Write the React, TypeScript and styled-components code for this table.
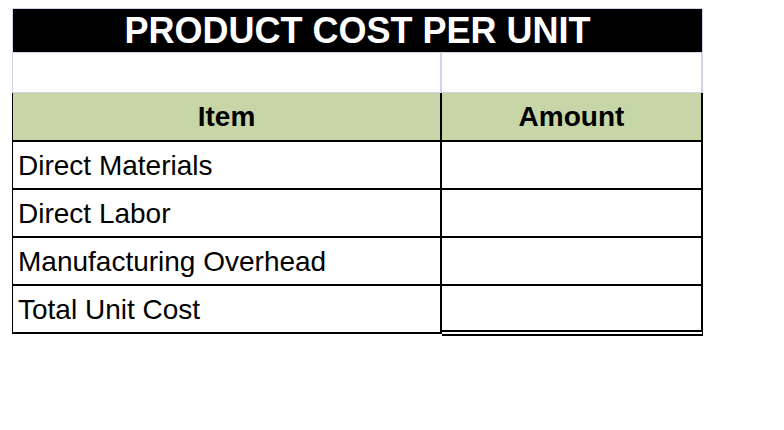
import styled, { createGlobalStyle } from 'styled-components';

const GRID_GRAY = '#d3d3e3';
const HEADER_GREEN = '#c7d6a7';

const GlobalStyle = createGlobalStyle`
  html, body {
    margin: 0;
    padding: 0;
    background: #ffffff;
  }
  body {
    font-family: "Liberation Sans", Arial, sans-serif;
  }
  #root {
    padding: 8px 0 0 12px;
  }
`;

const items = ['Direct Materials', 'Direct Labor', 'Manufacturing Overhead', 'Total Unit Cost'];

const App = () => {
  return (
    <>
      <GlobalStyle />
      <Sheet>
        <Title>PRODUCT COST PER UNIT</Title>

        <Row>
          <BlankCell $first />
          <BlankCell />
        </Row>

        <Row>
          <HeaderCell $first>Item</HeaderCell>
          <HeaderCell>Amount</HeaderCell>
        </Row>

        {items.map((item, i) => {
          const isTotal = i === items.length - 1;
          return (
            <Row key={item}>
              <ItemCell>{item}</ItemCell>
              <AmountCell $total={isTotal} />
            </Row>
          );
        })}
      </Sheet>
    </>
  );
};

const Sheet = styled.div`
  width: 691px;
  display: flex;
  flex-direction: column;
`;

const Title = styled.div`
  box-sizing: border-box;
  height: 44px;
  background: #000000;
  border: 1px solid ${GRID_GRAY};
  border-bottom: none;
  color: #ffffff;
  font-size: 36px;
  font-weight: 700;
  display: flex;
  align-items: center;
  justify-content: center;
  line-height: 1;
`;

const Row = styled.div`
  display: grid;
  grid-template-columns: 430px 261px;
  align-items: start;
`;

interface CellProps {
  $first?: boolean;
}

const BlankCell = styled.div<CellProps>`
  box-sizing: border-box;
  height: 41px;
  background: #ffffff;
  border-top: 1px solid ${GRID_GRAY};
  border-bottom: 1px solid ${GRID_GRAY};
  border-left: ${props => (props.$first ? `1px solid ${GRID_GRAY}` : 'none')};
  border-right: 2px solid ${GRID_GRAY};
`;

const HeaderCell = styled.div<CellProps>`
  box-sizing: border-box;
  height: 49px;
  background: ${HEADER_GREEN};
  border-bottom: 2px solid #000000;
  border-left: ${props => (props.$first ? '1px solid #000000' : 'none')};
  border-right: 2px solid #000000;
  display: flex;
  align-items: center;
  justify-content: center;
  font-size: 28px;
  font-weight: 700;
  color: #000000;
  line-height: 1;
`;

const ItemCell = styled.div`
  box-sizing: border-box;
  height: 48px;
  border-left: 1px solid #000000;
  border-right: 2px solid #000000;
  border-bottom: 2px solid #000000;
  padding: 2px 0 0 5px;
  display: flex;
  align-items: center;
  font-size: 28px;
  color: #000000;
  line-height: 1;
  white-space: nowrap;
`;

interface AmountProps {
  $total?: boolean;
}

const AmountCell = styled.div<AmountProps>`
  box-sizing: border-box;
  height: ${props => (props.$total ? '50px' : '48px')};
  border-right: 2px solid #000000;
  border-bottom: ${props => (props.$total ? '6px double #000000' : '2px solid #000000')};
`;

export default App;
